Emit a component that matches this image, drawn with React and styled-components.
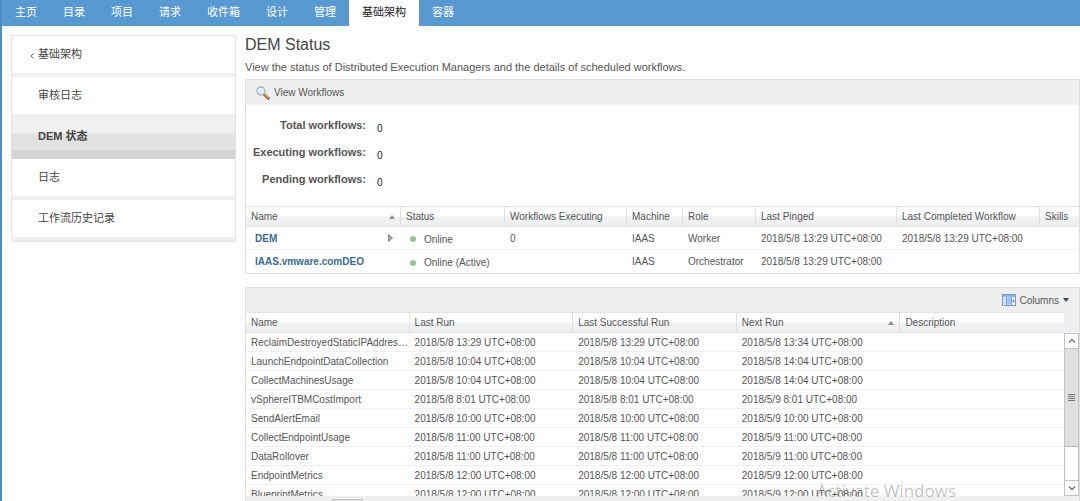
import React from 'react';
import styled, { createGlobalStyle } from 'styled-components';

const tabs = ['主页', '目录', '项目', '请求', '收件箱', '设计', '管理', '基础架构', '容器'];

const menu = ['审核日志', 'DEM 状态', '日志', '工作流历史记录'];

const stats = [
    ['Total workflows:', '0'],
    ['Executing workflows:', '0'],
    ['Pending workflows:', '0'],
];

const managers = [
    {
        name: 'DEM',
        expandable: true,
        status: 'Online',
        executing: '0',
        machine: 'IAAS',
        role: 'Worker',
        pinged: '2018/5/8 13:29 UTC+08:00',
        completed: '2018/5/8 13:29 UTC+08:00',
    },
    {
        name: 'IAAS.vmware.comDEO',
        status: 'Online (Active)',
        machine: 'IAAS',
        role: 'Orchestrator',
        pinged: '2018/5/8 13:29 UTC+08:00',
    },
];

const workflows = [
    ['ReclaimDestroyedStaticIPAddresses', '2018/5/8 13:29', '2018/5/8 13:34'],
    ['LaunchEndpointDataCollection', '2018/5/8 10:04', '2018/5/8 14:04'],
    ['CollectMachinesUsage', '2018/5/8 10:04', '2018/5/8 14:04'],
    ['vSphereITBMCostImport', '2018/5/8 8:01', '2018/5/9 8:01'],
    ['SendAlertEmail', '2018/5/8 10:00', '2018/5/9 10:00'],
    ['CollectEndpointUsage', '2018/5/8 11:00', '2018/5/9 11:00'],
    ['DataRollover', '2018/5/8 11:00', '2018/5/9 11:00'],
    ['EndpointMetrics', '2018/5/8 12:00', '2018/5/9 12:00'],
    ['BlueprintMetrics', '2018/5/8 12:00', '2018/5/9 12:00'],
];

function SearchIcon() {
    return (
        <svg width="14" height="14" viewBox="0 0 14 14" aria-hidden="true">
            <path d="M8 8 L12.3 12.3" stroke="#8c5f35" strokeWidth="3" strokeLinecap="round" />
            <path d="M8.6 7.8 L12.4 11.4" stroke="#e9b775" strokeWidth="1.4" strokeLinecap="round" />
            <circle cx="5" cy="5" r="4" fill="#dceefa" stroke="#a3b4bf" strokeWidth="1.3" />
            <path d="M2.7 5 A2.4 2.4 0 0 1 5 2.6" stroke="#fff" strokeWidth="1.2" fill="none" />
        </svg>
    );
}

function ColumnsIcon() {
    return (
        <svg width="14" height="12" viewBox="0 0 14 12" aria-hidden="true">
            <rect x="0.5" y="0.5" width="13" height="11" fill="#fff" stroke="#6f9edb" />
            <rect x="1" y="1" width="12" height="2" fill="#8db4e8" />
            <rect x="4" y="3" width="6" height="8" fill="#c3dafa" />
            <path d="M4.5 3 V11 M9.5 3 V11" stroke="#6f9edb" />
            <path d="M1.5 5 H3.5 M1.5 7 H3.5 M1.5 9 H3.5 M5.5 5 H8.5 M5.5 7 H8.5 M5.5 9 H8.5" stroke="#7fa9e0" />
            <path d="M10.7 5 L12.7 7 L10.7 9 Z" fill="#3f78c9" />
        </svg>
    );
}

function SortIcon() {
    return (
        <svg width="6" height="4" viewBox="0 0 6 4" aria-hidden="true">
            <path d="M0 4 L3 0 L6 4 Z" fill="#8a8a8a" />
        </svg>
    );
}

function Heading({ children, sorted }) {
    return (
        <th scope="col">
            <HeadLabel>
                {children}
                {sorted && <SortIcon />}
            </HeadLabel>
        </th>
    );
}

function App() {
    return (
        <Page>
            <GlobalStyle />
            <Nav>
                {tabs.map((tab) => (
                    <Tab key={tab} href="#" $active={tab === '基础架构'}>
                        {tab}
                    </Tab>
                ))}
            </Nav>
            <Main>
                <Sidebar>
                    <MenuItem href="#">
                        <Back viewBox="0 0 4 6" aria-hidden="true">
                            <path d="M3.4 0.5 L1 3 L3.4 5.5" fill="none" stroke="#555" />
                        </Back>
                        基础架构
                    </MenuItem>
                    {menu.map((item) => (
                        <MenuItem key={item} href="#" $active={item === 'DEM 状态'}>
                            {item}
                        </MenuItem>
                    ))}
                </Sidebar>
                <Content>
                    <h1>DEM Status</h1>
                    <p>View the status of Distributed Execution Managers and the details of scheduled workflows.</p>
                    <Panel>
                        <Toolbar>
                            <ToolButton type="button">
                                <SearchIcon />
                                View Workflows
                            </ToolButton>
                        </Toolbar>
                        <Stats>
                            {stats.map(([label, value]) => (
                                <Stat key={label}>
                                    <dt>{label}</dt>
                                    <dd>{value}</dd>
                                </Stat>
                            ))}
                        </Stats>
                        <Table $rowHeight={23}>
                            <colgroup>
                                <Col $width="155px" />
                                <Col $width="104px" />
                                <Col $width="122px" />
                                <Col $width="56px" />
                                <Col $width="73px" />
                                <Col $width="141px" />
                                <Col $width="143px" />
                                <Col />
                            </colgroup>
                            <thead>
                                <tr>
                                    <Heading sorted>Name</Heading>
                                    <Heading>Status</Heading>
                                    <Heading>Workflows Executing</Heading>
                                    <Heading>Machine</Heading>
                                    <Heading>Role</Heading>
                                    <Heading>Last Pinged</Heading>
                                    <Heading>Last Completed Workflow</Heading>
                                    <Heading>Skills</Heading>
                                </tr>
                            </thead>
                            <tbody>
                                {managers.map((dem) => (
                                    <tr key={dem.name}>
                                        <td>
                                            <NameCell>
                                                <a href="#">{dem.name}</a>
                                                {dem.expandable && (
                                                    <svg width="5" height="8" viewBox="0 0 5 8" aria-hidden="true">
                                                        <path d="M0.5 0.5 L4.5 4 L0.5 7.5 Z" fill="#aaa" stroke="#888" />
                                                    </svg>
                                                )}
                                            </NameCell>
                                        </td>
                                        <td>
                                            <Status>{dem.status}</Status>
                                        </td>
                                        <td>{dem.executing}</td>
                                        <td>{dem.machine}</td>
                                        <td>{dem.role}</td>
                                        <td>{dem.pinged}</td>
                                        <td>{dem.completed}</td>
                                        <td />
                                    </tr>
                                ))}
                            </tbody>
                        </Table>
                    </Panel>
                    <Panel $fill>
                        <Toolbar $end>
                            <ToolButton type="button">
                                <ColumnsIcon />
                                Columns
                                <svg width="6" height="4" viewBox="0 0 6 4" aria-hidden="true">
                                    <path d="M0 0 L6 0 L3 4 Z" fill="#444" />
                                </svg>
                            </ToolButton>
                        </Toolbar>
                        <Grid>
                            <Rows>
                                <Table $rowHeight={19}>
                                    <colgroup>
                                        <Col $width="20%" />
                                        <Col $width="20%" />
                                        <Col $width="20%" />
                                        <Col $width="20%" />
                                        <Col $width="20%" />
                                    </colgroup>
                                    <thead>
                                        <tr>
                                            <Heading>Name</Heading>
                                            <Heading>Last Run</Heading>
                                            <Heading>Last Successful Run</Heading>
                                            <Heading sorted>Next Run</Heading>
                                            <Heading>Description</Heading>
                                        </tr>
                                    </thead>
                                    <tbody>
                                        {workflows.map(([name, last, next]) => (
                                            <tr key={name}>
                                                <td>{name}</td>
                                                <td>{last} UTC+08:00</td>
                                                <td>{last} UTC+08:00</td>
                                                <td>{next} UTC+08:00</td>
                                                <td />
                                            </tr>
                                        ))}
                                    </tbody>
                                </Table>
                            </Rows>
                            <Scrollbar>
                                <ScrollButton type="button" aria-label="Scroll up">
                                    <svg width="8" height="6" viewBox="0 0 8 6">
                                        <path d="M1 4.5 L4 1.5 L7 4.5" fill="none" stroke="#777" strokeWidth="1.4" />
                                    </svg>
                                </ScrollButton>
                                <Track>
                                    <Thumb>
                                        <svg width="7" height="8" viewBox="0 0 7 8">
                                            <path d="M0 0.5 H7 M0 2.5 H7 M0 4.5 H7 M0 6.5 H7" stroke="#777" />
                                        </svg>
                                    </Thumb>
                                </Track>
                                <ScrollButton type="button" aria-label="Scroll down">
                                    <svg width="8" height="6" viewBox="0 0 8 6">
                                        <path d="M1 1.5 L4 4.5 L7 1.5" fill="none" stroke="#777" strokeWidth="1.4" />
                                    </svg>
                                </ScrollButton>
                            </Scrollbar>
                        </Grid>
                        <Footer>
                            <Handle />
                        </Footer>
                    </Panel>
                </Content>
            </Main>
            <Watermark>Activate Windows</Watermark>
        </Page>
    );
}
export default App;

const GlobalStyle = createGlobalStyle`
    * {
        box-sizing: border-box;
    }
    body {
        margin: 0;
        background-color: #fff;
        color: #555;
        font-family: 'Liberation Sans', 'Noto Sans CJK SC', sans-serif;
        font-size: 10px;
    }
    a {
        text-decoration: none;
    }
    button {
        font: inherit;
        color: inherit;
        border: none;
        padding: 0;
        cursor: pointer;
    }
`;

const Page = styled.div`
    position: relative;
    display: flex;
    flex-direction: column;
    height: 100vh;
    overflow: hidden;
    border-left: 2px solid #4a8cc8;
`;

const Nav = styled.nav`
    display: flex;
    height: 26px;
    flex-shrink: 0;
    background-color: #5899d2;
`;

const Tab = styled.a`
    padding: 0 13px;
    font-size: 11px;
    line-height: 24px;
    color: ${({ $active }) => ($active ? '#222' : '#fff')};
    background-color: ${({ $active }) => ($active ? '#fff' : 'transparent')};
`;

const Main = styled.main`
    flex: 1;
    min-height: 0;
    display: flex;
    gap: 9px;
    padding: 9px 0 0 9px;
`;

const Sidebar = styled.nav`
    width: 225px;
    flex-shrink: 0;
    align-self: flex-start;
    border: 1px solid #e4e4e4;
`;

const MenuItem = styled.a`
    position: relative;
    display: block;
    height: 41px;
    padding-left: 26px;
    font-size: 11px;
    line-height: 37px;
    color: #444;
    border-bottom: 4px solid #efefef;
    ${({ $active }) =>
        $active &&
        `
        font-weight: bold;
        border-bottom: 9px solid #d4d4d4;
        background: linear-gradient(#f0f0f0 15px, #e2e2e2 16px);
    `}
`;

const Back = styled.svg`
    position: absolute;
    left: 18px;
    top: 17px;
    width: 4px;
    height: 6px;
`;

const Content = styled.section`
    flex: 1;
    min-width: 0;
    display: flex;
    flex-direction: column;
    h1 {
        margin: 0;
        font-size: 16px;
        font-weight: normal;
        line-height: 20px;
        color: #444;
    }
    p {
        margin: 4px 0;
        font-size: 11px;
        line-height: 16px;
    }
`;

const Panel = styled.div`
    border: 1px solid #dedede;
    ${({ $fill }) =>
        $fill &&
        `
        flex: 1;
        min-height: 0;
        display: flex;
        flex-direction: column;
        margin-top: 13px;
        border-bottom: none;
    `}
`;

const Toolbar = styled.div`
    display: flex;
    align-items: center;
    justify-content: ${({ $end }) => ($end ? 'flex-end' : 'flex-start')};
    height: ${({ $end }) => ($end ? '24px' : '25px')};
    flex-shrink: 0;
    padding: 0 10px;
    background-color: #efefef;
`;

const ToolButton = styled.button`
    display: flex;
    align-items: center;
    gap: 4px;
    background: none;
`;

const Stats = styled.dl`
    margin: 0;
    padding: 7px 0 13px;
`;

const Stat = styled.div`
    display: flex;
    gap: 11px;
    line-height: 27px;
    dt {
        width: 120px;
        text-align: right;
        font-size: 11px;
        font-weight: bold;
    }
    dd {
        margin: 0;
        padding-top: 7px;
        line-height: 20px;
        color: #222;
    }
`;

const Table = styled.table`
    width: 100%;
    table-layout: fixed;
    border-collapse: separate;
    border-spacing: 0;
    th,
    td {
        padding: 0 0 0 5px;
        text-align: left;
        font-weight: normal;
        white-space: nowrap;
        overflow: hidden;
        text-overflow: ellipsis;
    }
    th {
        height: 21px;
        padding-right: 5px;
        border-top: 1px solid #e4e4e4;
        border-right: 1px solid #e0e0e0;
        border-bottom: 1px solid #e4e4e4;
        background: linear-gradient(#fff 9px, #f0f1f4 10px, #efefef);
    }
    th:last-child {
        border-right: none;
    }
    td {
        height: ${({ $rowHeight }) => $rowHeight}px;
        border-bottom: 1px solid #efefef;
    }
    tr:last-child td {
        border-bottom: none;
    }
`;

const Col = styled.col`
    width: ${({ $width }) => $width || 'auto'};
`;

const HeadLabel = styled.div`
    display: flex;
    align-items: center;
    justify-content: space-between;
`;

const NameCell = styled.div`
    display: flex;
    align-items: center;
    justify-content: space-between;
    padding: 0 8px 0 4px;
    a {
        color: #3a6a94;
        font-weight: bold;
    }
`;

const Status = styled.span`
    display: flex;
    align-items: center;
    gap: 8px;
    padding: 2px 0 0 4px;
    &::before {
        content: '';
        width: 6px;
        height: 6px;
        border-radius: 50%;
        background-color: #8fc987;
    }
`;

const Grid = styled.div`
    flex: 1;
    min-height: 0;
    display: flex;
    background-color: #efefef;
`;

const Rows = styled.div`
    flex: 1;
    min-width: 0;
    overflow: hidden;
    background-color: #fff;
`;

const Scrollbar = styled.div`
    width: 15px;
    margin-top: 21px;
    display: flex;
    flex-direction: column;
    border: 1px solid #c4c4c4;
    background-color: #fff;
`;

const ScrollButton = styled.button`
    height: 14px;
    display: flex;
    align-items: center;
    justify-content: center;
    background-color: #fff;
`;

const Track = styled.div`
    flex: 1;
    border-top: 1px solid #c4c4c4;
    border-bottom: 1px solid #c4c4c4;
`;

const Thumb = styled.div`
    height: 75%;
    display: flex;
    align-items: center;
    justify-content: center;
    border-bottom: 1px solid #b4b4b4;
    background-color: #dfdfdf;
`;

const Footer = styled.div`
    height: 5px;
    flex-shrink: 0;
    display: flex;
    align-items: flex-end;
    padding-left: 86px;
    background-color: #efefef;
`;

const Handle = styled.div`
    width: 31px;
    height: 2px;
    border: 1px solid #c4c4c4;
    border-bottom: none;
    background-color: #dfdfdf;
`;

const Watermark = styled.div`
    position: absolute;
    right: 124px;
    bottom: 0;
    font-family: 'Open Sans', sans-serif;
    font-size: 17px;
    line-height: 20px;
    color: rgba(120, 120, 120, 0.45);
    pointer-events: none;
`;
